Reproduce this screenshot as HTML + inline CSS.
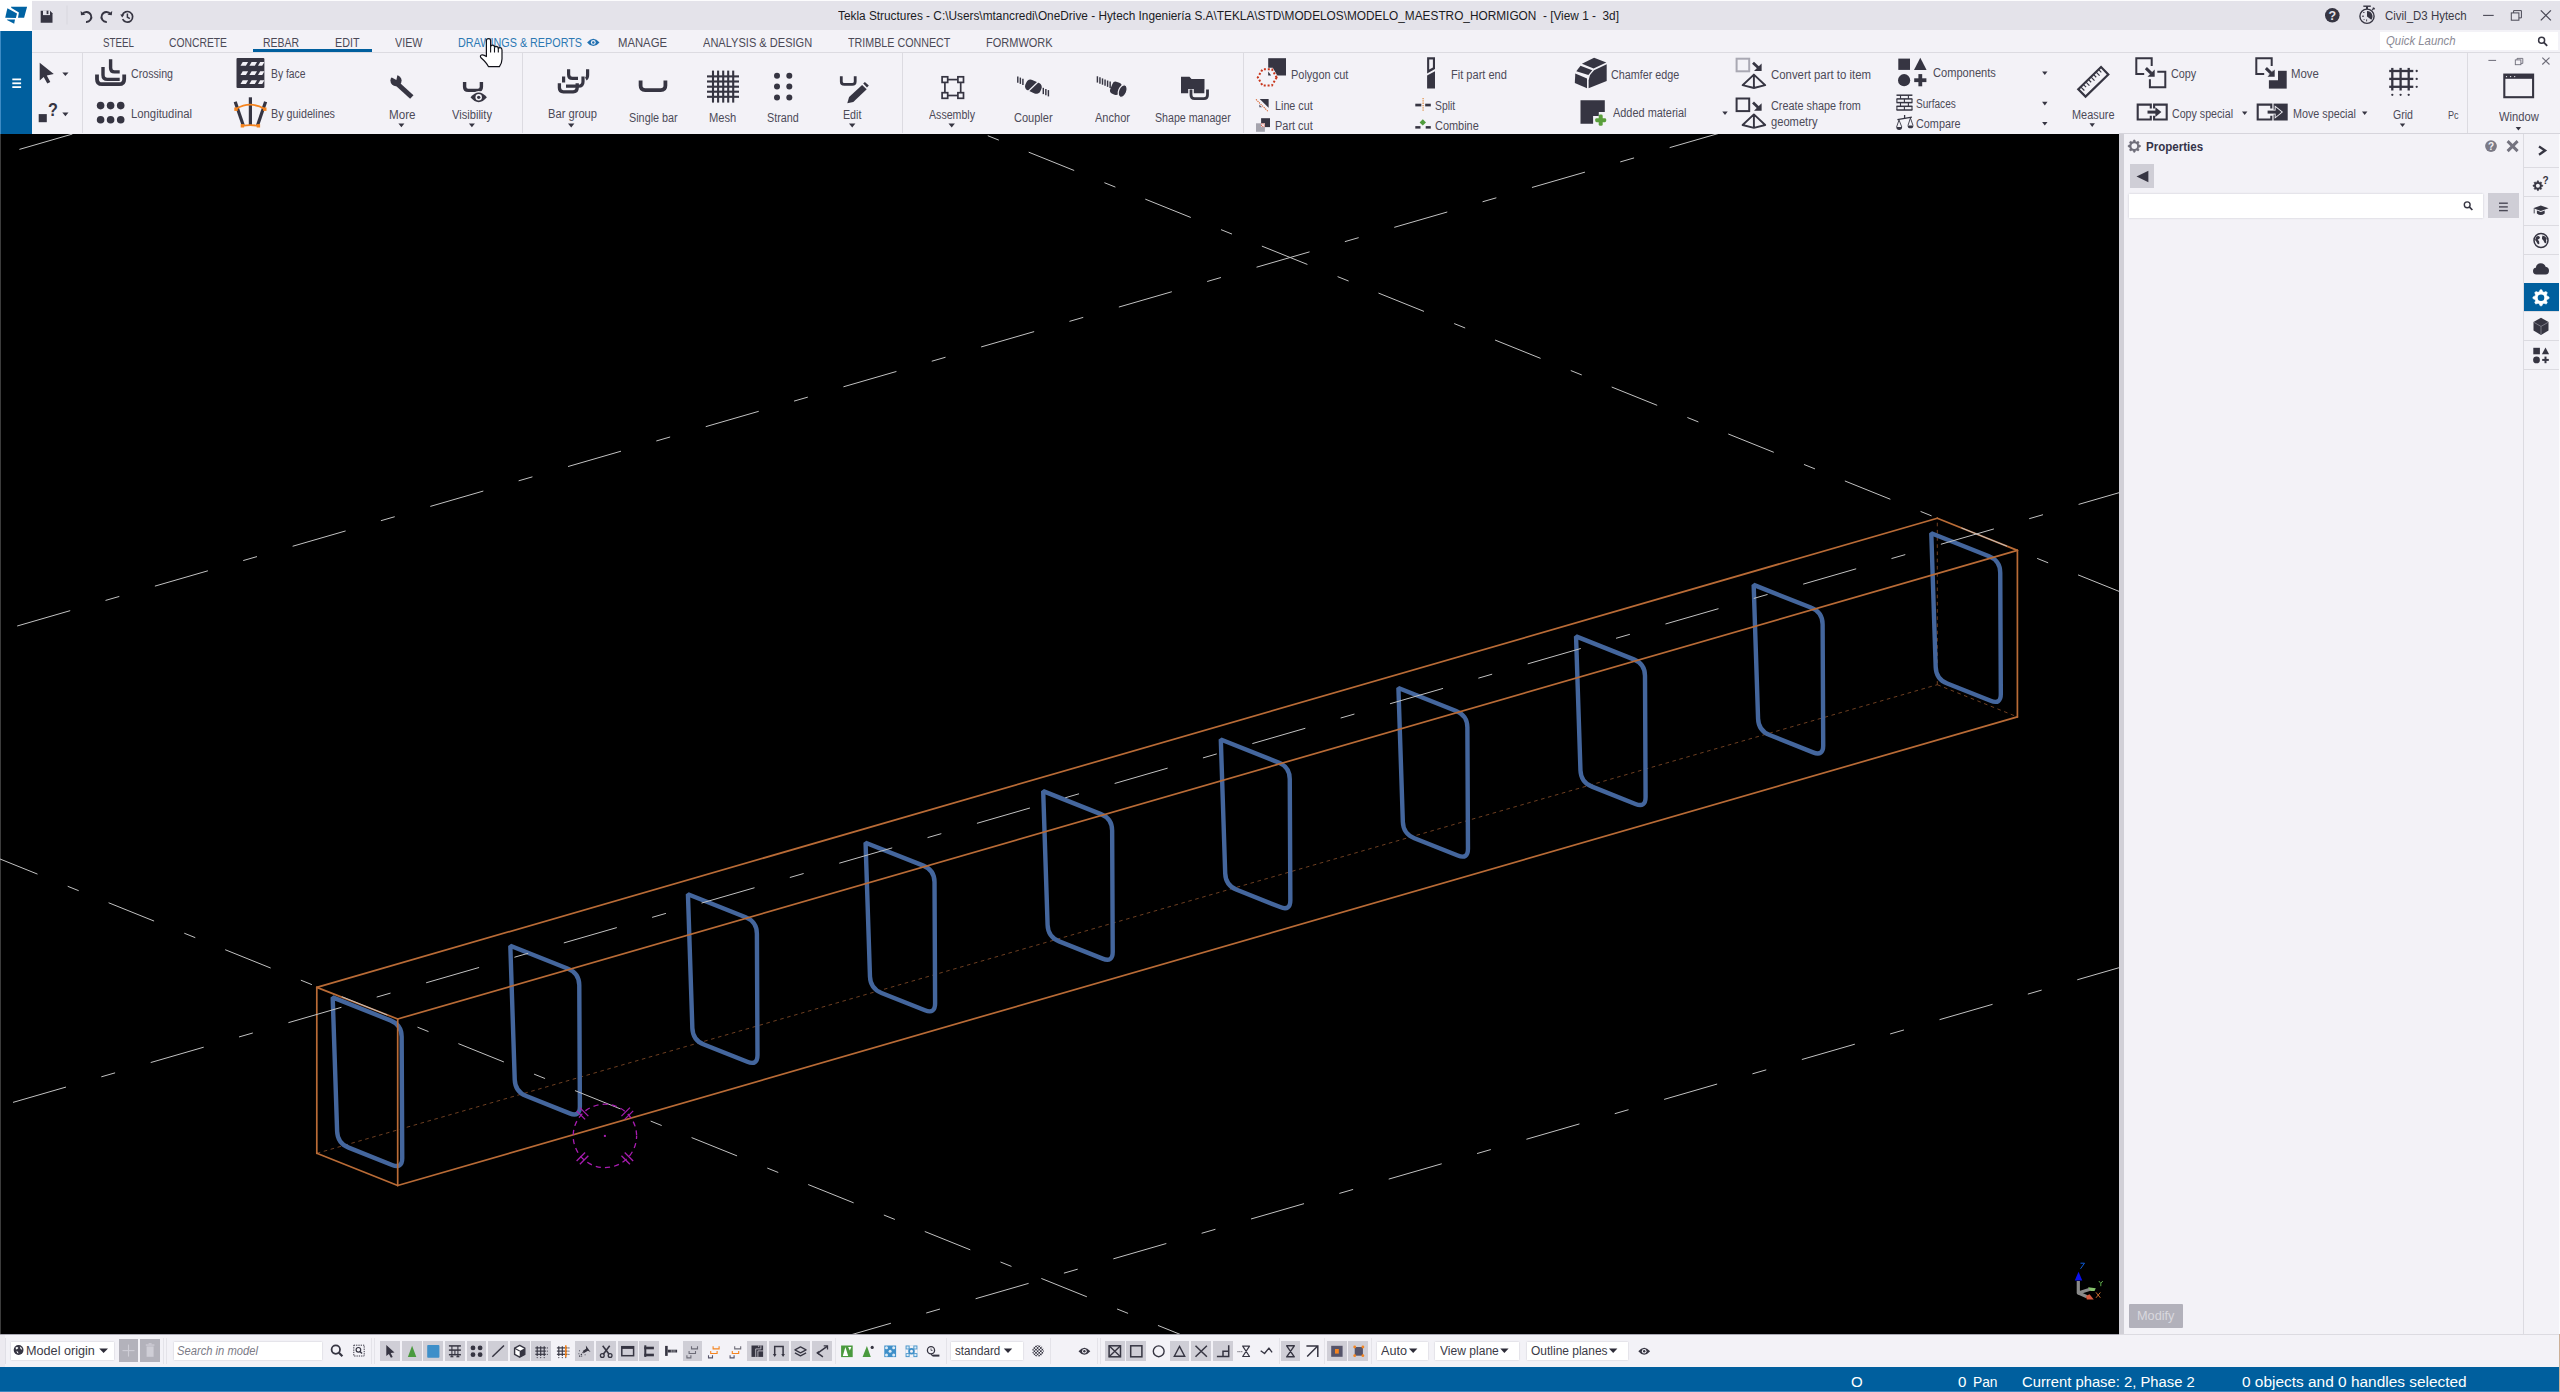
<!DOCTYPE html>
<html><head><meta charset="utf-8"><title>Tekla Structures</title>
<style>
html,body{margin:0;padding:0;}
body{width:2560px;height:1392px;position:relative;overflow:hidden;background:#f3f2f7;font-family:"Liberation Sans",sans-serif;}
body>div,body>span,body>svg{position:absolute;display:block;}
body>span{white-space:pre;transform-origin:0 50%;}
svg{overflow:visible;}
</style></head><body>
<div style="left:0px;top:0px;width:2560px;height:30px;background:#e4e3ea;"></div>
<div style="left:0px;top:0px;width:2560px;height:1px;background:#fcfcfd;"></div>
<div style="left:0px;top:0px;width:32px;height:30.5px;background:#ffffff;"></div>
<div style="left:32px;top:30px;width:2528px;height:104px;background:#f3f2f7;"></div>
<div style="left:32px;top:52px;width:2528px;height:1px;background:#dcdbe1;"></div>
<div style="left:0px;top:30.5px;width:32px;height:103.5px;background:#005f9e;"></div>
<div style="left:0px;top:30.5px;width:1px;height:103.5px;background:#3d8bc4;"></div>
<div style="left:82px;top:53px;width:1px;height:80px;background:#dcdbe1;"></div>
<div style="left:522px;top:53px;width:1px;height:80px;background:#dcdbe1;"></div>
<div style="left:902px;top:53px;width:1px;height:80px;background:#dcdbe1;"></div>
<div style="left:1243px;top:53px;width:1px;height:80px;background:#dcdbe1;"></div>
<div style="left:2467px;top:53px;width:1px;height:80px;background:#dcdbe1;"></div>
<div style="left:253px;top:49px;width:119px;height:3px;background:#005f9e;"></div>
<div style="left:2380px;top:32px;width:178px;height:18px;background:#ffffff;"></div>
<div style="left:0px;top:134px;width:2119px;height:1200px;background:#000000;"></div>
<div style="left:0px;top:134px;width:1px;height:1200px;background:#3c3c3c;"></div>
<div style="left:2119px;top:134px;width:5px;height:1200px;background:#d1d0d7;"></div>
<div style="left:2124px;top:134px;width:400px;height:1200px;background:#f3f2f7;"></div>
<div style="left:2119px;top:133px;width:441px;height:1px;background:#d6d5dc;"></div>
<div style="left:2523px;top:134px;width:1px;height:1200px;background:#dcdbe1;"></div>
<div style="left:2524px;top:134px;width:35px;height:1200px;background:#f3f2f7;"></div>
<div style="left:2559px;top:134px;width:1px;height:1200px;background:#fbfbfd;"></div>
<div style="left:2524px;top:167px;width:35px;height:1px;background:#dcdbe1;"></div>
<div style="left:2524px;top:196px;width:35px;height:1px;background:#dcdbe1;"></div>
<div style="left:2524px;top:225px;width:35px;height:1px;background:#dcdbe1;"></div>
<div style="left:2524px;top:254px;width:35px;height:1px;background:#dcdbe1;"></div>
<div style="left:2524px;top:283px;width:35px;height:1px;background:#dcdbe1;"></div>
<div style="left:2524px;top:311px;width:35px;height:1px;background:#dcdbe1;"></div>
<div style="left:2524px;top:340px;width:35px;height:1px;background:#dcdbe1;"></div>
<div style="left:2524px;top:369px;width:35px;height:1px;background:#dcdbe1;"></div>
<div style="left:2524.4px;top:283px;width:34.6px;height:28.3px;background:#005f9e;"></div>
<div style="left:2130px;top:164px;width:24px;height:24px;background:#cfced6;"></div>
<div style="left:2129px;top:194px;width:354px;height:24px;background:#ffffff;box-shadow:0 0 2px rgba(120,118,135,.35);"></div>
<div style="left:2488px;top:193px;width:31px;height:25px;background:#cfced6;"></div>
<div style="left:2129px;top:1304px;width:54px;height:24px;background:#b2b1bb;border-radius:1px;"></div>
<div style="left:0px;top:1334px;width:2560px;height:33px;background:#f3f2f7;"></div>
<div style="left:2119px;top:1334px;width:441px;height:1px;background:#dcdbe1;"></div>
<div style="left:0px;top:1367px;width:2560px;height:25px;background:#005f9e;"></div>
<div style="left:10.6px;top:1341.8px;width:103px;height:18.4px;background:#ffffff;box-shadow:0 0 1.5px rgba(120,118,135,.4);"></div>
<div style="left:119px;top:1339px;width:19px;height:23px;background:#b3b2bb;"></div>
<div style="left:140px;top:1339px;width:20px;height:23px;background:#b3b2bb;"></div>
<div style="left:163px;top:1338px;width:1px;height:26px;background:#e4e3e9;"></div>
<div style="left:166px;top:1338px;width:1px;height:26px;background:#e4e3e9;"></div>
<div style="left:371px;top:1338px;width:1px;height:26px;background:#e4e3e9;"></div>
<div style="left:374px;top:1338px;width:1px;height:26px;background:#e4e3e9;"></div>
<div style="left:1097px;top:1338px;width:1px;height:26px;background:#e4e3e9;"></div>
<div style="left:1100px;top:1338px;width:1px;height:26px;background:#e4e3e9;"></div>
<div style="left:174px;top:1341.8px;width:148.2px;height:18.4px;background:#ffffff;box-shadow:0 0 1.5px rgba(120,118,135,.4);"></div>
<div style="left:380.2px;top:1341px;width:19.8px;height:20px;background:#cfced6;"></div>
<div style="left:401.8px;top:1341px;width:19.8px;height:20px;background:#cfced6;"></div>
<div style="left:423.4px;top:1341px;width:19.8px;height:20px;background:#cfced6;"></div>
<div style="left:445.0px;top:1341px;width:19.8px;height:20px;background:#cfced6;"></div>
<div style="left:466.6px;top:1341px;width:19.8px;height:20px;background:#cfced6;"></div>
<div style="left:488.2px;top:1341px;width:19.8px;height:20px;background:#cfced6;"></div>
<div style="left:509.8px;top:1341px;width:19.8px;height:20px;background:#cfced6;"></div>
<div style="left:531.4px;top:1341px;width:19.8px;height:20px;background:#cfced6;"></div>
<div style="left:574.6px;top:1341px;width:19.8px;height:20px;background:#cfced6;"></div>
<div style="left:596.2px;top:1341px;width:19.8px;height:20px;background:#cfced6;"></div>
<div style="left:617.8px;top:1341px;width:19.8px;height:20px;background:#cfced6;"></div>
<div style="left:639.4px;top:1341px;width:19.8px;height:20px;background:#cfced6;"></div>
<div style="left:682.6px;top:1341px;width:19.8px;height:20px;background:#cfced6;"></div>
<div style="left:747.4px;top:1341px;width:19.8px;height:20px;background:#cfced6;"></div>
<div style="left:769.0px;top:1341px;width:19.8px;height:20px;background:#cfced6;"></div>
<div style="left:790.6px;top:1341px;width:19.8px;height:20px;background:#cfced6;"></div>
<div style="left:812.2px;top:1341px;width:19.8px;height:20px;background:#cfced6;"></div>
<div style="left:835px;top:1338px;width:1px;height:26px;background:#e4e3e9;"></div>
<div style="left:946px;top:1338px;width:1px;height:26px;background:#e4e3e9;"></div>
<div style="left:1050px;top:1338px;width:1px;height:26px;background:#e4e3e9;"></div>
<div style="left:951px;top:1341.6px;width:72px;height:18.8px;background:#ffffff;box-shadow:0 0 1.5px rgba(120,118,135,.4);"></div>
<div style="left:1104.8px;top:1341px;width:19.8px;height:20px;background:#cfced6;"></div>
<div style="left:1126.4px;top:1341px;width:19.8px;height:20px;background:#cfced6;"></div>
<div style="left:1169.6px;top:1341px;width:19.8px;height:20px;background:#cfced6;"></div>
<div style="left:1191.2px;top:1341px;width:19.8px;height:20px;background:#cfced6;"></div>
<div style="left:1212.8px;top:1341px;width:19.8px;height:20px;background:#cfced6;"></div>
<div style="left:1278.5px;top:1338px;width:1px;height:26px;background:#e4e3e9;"></div>
<div style="left:1280.6px;top:1341px;width:19.8px;height:20px;background:#cfced6;"></div>
<div style="left:1324.3px;top:1338px;width:1px;height:26px;background:#e4e3e9;"></div>
<div style="left:1326.8px;top:1341px;width:19.8px;height:20px;background:#cfced6;"></div>
<div style="left:1348.4px;top:1341px;width:19.8px;height:20px;background:#cfced6;"></div>
<div style="left:1371px;top:1338px;width:1px;height:26px;background:#e4e3e9;"></div>
<div style="left:1376.6px;top:1341.6px;width:51.2px;height:18.8px;background:#ffffff;box-shadow:0 0 1.5px rgba(120,118,135,.4);"></div>
<div style="left:1435.4px;top:1341.6px;width:83.6px;height:18.8px;background:#ffffff;box-shadow:0 0 1.5px rgba(120,118,135,.4);"></div>
<div style="left:1526.7px;top:1341.6px;width:101.4px;height:18.8px;background:#ffffff;box-shadow:0 0 1.5px rgba(120,118,135,.4);"></div>
<div style="left:2559px;top:1334px;width:1px;height:58px;background:#cdb097;"></div>
<div style="left:0px;top:1391px;width:2559px;height:1px;background:#3a86c0;"></div>
<div style="left:0px;top:1334px;width:2119px;height:1px;background:#a9a8b2;"></div>
<div style="left:0px;top:1335px;width:5px;height:32px;background:#eceaf0;"></div>
<div style="left:5px;top:1338px;width:1px;height:26px;background:#e0dfe6;"></div>
<span style="left:838.00px;top:7.20px;font-size:12px;line-height:18px;color:#1b1b1f;transform:scaleX(0.9861);">Tekla Structures - C:\Users\mtancredi\OneDrive - Hytech Ingeniería S.A\TEKLA\STD\MODELOS\MODELO_MAESTRO_HORMIGON  - [View 1 -  3d]</span>
<span style="left:2384.60px;top:6.70px;font-size:12.5px;line-height:19px;color:#3b3a46;transform:scaleX(0.9177);">Civil_D3 Hytech</span>
<span style="left:102.50px;top:33.00px;font-size:13px;line-height:20px;color:#4b4956;transform:scaleX(0.7527);">STEEL</span>
<span style="left:169.00px;top:33.00px;font-size:13px;line-height:20px;color:#4b4956;transform:scaleX(0.7951);">CONCRETE</span>
<span style="left:262.50px;top:33.00px;font-size:13px;line-height:20px;color:#4b4956;transform:scaleX(0.8037);">REBAR</span>
<span style="left:334.50px;top:33.00px;font-size:13px;line-height:20px;color:#4b4956;transform:scaleX(0.8274);">EDIT</span>
<span style="left:394.50px;top:33.00px;font-size:13px;line-height:20px;color:#4b4956;transform:scaleX(0.8277);">VIEW</span>
<span style="left:618.00px;top:33.00px;font-size:13px;line-height:20px;color:#4b4956;transform:scaleX(0.8697);">MANAGE</span>
<span style="left:703.40px;top:33.00px;font-size:13px;line-height:20px;color:#4b4956;transform:scaleX(0.8507);">ANALYSIS &amp; DESIGN</span>
<span style="left:848.30px;top:33.00px;font-size:13px;line-height:20px;color:#4b4956;transform:scaleX(0.8243);">TRIMBLE CONNECT</span>
<span style="left:986.30px;top:33.00px;font-size:13px;line-height:20px;color:#4b4956;transform:scaleX(0.8461);">FORMWORK</span>
<span style="left:458.00px;top:33.00px;font-size:13px;line-height:20px;color:#2c78b3;transform:scaleX(0.8293);">DRAWINGS &amp; REPORTS</span>
<span style="left:2386.00px;top:32.10px;font-size:12.5px;line-height:19px;color:#8b8a95;font-style:italic;transform:scaleX(0.9106);">Quick Launch</span>
<span style="left:130.50px;top:65.30px;font-size:12px;line-height:18px;color:#4c4a57;transform:scaleX(0.8870);">Crossing</span>
<span style="left:130.50px;top:105.30px;font-size:12px;line-height:18px;color:#4c4a57;transform:scaleX(0.9424);">Longitudinal</span>
<span style="left:270.50px;top:65.30px;font-size:12px;line-height:18px;color:#4c4a57;transform:scaleX(0.8621);">By face</span>
<span style="left:270.50px;top:105.30px;font-size:12px;line-height:18px;color:#4c4a57;transform:scaleX(0.8966);">By guidelines</span>
<span style="left:389.00px;top:106.30px;font-size:12px;line-height:18px;color:#4c4a57;transform:scaleX(0.9692);">More</span>
<span style="left:452.00px;top:106.30px;font-size:12px;line-height:18px;color:#4c4a57;transform:scaleX(0.9275);">Visibility</span>
<span style="left:548.00px;top:105.30px;font-size:12px;line-height:18px;color:#4c4a57;transform:scaleX(0.9298);">Bar group</span>
<span style="left:628.60px;top:108.60px;font-size:12px;line-height:18px;color:#4c4a57;transform:scaleX(0.9012);">Single bar</span>
<span style="left:708.70px;top:108.60px;font-size:12px;line-height:18px;color:#4c4a57;transform:scaleX(0.9303);">Mesh</span>
<span style="left:767.20px;top:108.60px;font-size:12px;line-height:18px;color:#4c4a57;transform:scaleX(0.8994);">Strand</span>
<span style="left:842.90px;top:105.60px;font-size:12px;line-height:18px;color:#4c4a57;transform:scaleX(0.8898);">Edit</span>
<span style="left:929.00px;top:105.60px;font-size:12px;line-height:18px;color:#4c4a57;transform:scaleX(0.8844);">Assembly</span>
<span style="left:1013.70px;top:108.60px;font-size:12px;line-height:18px;color:#4c4a57;transform:scaleX(0.9185);">Coupler</span>
<span style="left:1095.30px;top:108.60px;font-size:12px;line-height:18px;color:#4c4a57;transform:scaleX(0.9205);">Anchor</span>
<span style="left:1154.70px;top:108.60px;font-size:12px;line-height:18px;color:#4c4a57;transform:scaleX(0.8864);">Shape manager</span>
<span style="left:1291.00px;top:65.50px;font-size:12px;line-height:18px;color:#4c4a57;transform:scaleX(0.9138);">Polygon cut</span>
<span style="left:1275.30px;top:97.00px;font-size:12px;line-height:18px;color:#4c4a57;transform:scaleX(0.8970);">Line cut</span>
<span style="left:1275.30px;top:117.10px;font-size:12px;line-height:18px;color:#4c4a57;transform:scaleX(0.9117);">Part cut</span>
<span style="left:1451.40px;top:65.50px;font-size:12px;line-height:18px;color:#4c4a57;transform:scaleX(0.9209);">Fit part end</span>
<span style="left:1435.20px;top:97.00px;font-size:12px;line-height:18px;color:#4c4a57;transform:scaleX(0.8610);">Split</span>
<span style="left:1435.20px;top:117.10px;font-size:12px;line-height:18px;color:#4c4a57;transform:scaleX(0.9120);">Combine</span>
<span style="left:1611.20px;top:65.50px;font-size:12px;line-height:18px;color:#4c4a57;transform:scaleX(0.8981);">Chamfer edge</span>
<span style="left:1613.00px;top:104.20px;font-size:12px;line-height:18px;color:#4c4a57;transform:scaleX(0.9106);">Added material</span>
<span style="left:1771.00px;top:65.50px;font-size:12px;line-height:18px;color:#4c4a57;transform:scaleX(0.9490);">Convert part to item</span>
<span style="left:1771.00px;top:97.00px;font-size:12px;line-height:18px;color:#4c4a57;transform:scaleX(0.9036);">Create shape from</span>
<span style="left:1771.00px;top:112.50px;font-size:12px;line-height:18px;color:#4c4a57;transform:scaleX(0.9296);">geometry</span>
<span style="left:1932.60px;top:64.30px;font-size:12px;line-height:18px;color:#4c4a57;transform:scaleX(0.9244);">Components</span>
<span style="left:1916.40px;top:94.90px;font-size:12px;line-height:18px;color:#4c4a57;transform:scaleX(0.8404);">Surfaces</span>
<span style="left:1916.40px;top:114.80px;font-size:12px;line-height:18px;color:#4c4a57;transform:scaleX(0.9036);">Compare</span>
<span style="left:2071.80px;top:105.50px;font-size:12px;line-height:18px;color:#4c4a57;transform:scaleX(0.9103);">Measure</span>
<span style="left:2170.80px;top:65.10px;font-size:12px;line-height:18px;color:#4c4a57;transform:scaleX(0.8995);">Copy</span>
<span style="left:2172.20px;top:104.70px;font-size:12px;line-height:18px;color:#4c4a57;transform:scaleX(0.8879);">Copy special</span>
<span style="left:2290.90px;top:65.10px;font-size:12px;line-height:18px;color:#4c4a57;transform:scaleX(0.9508);">Move</span>
<span style="left:2292.50px;top:104.70px;font-size:12px;line-height:18px;color:#4c4a57;transform:scaleX(0.8981);">Move special</span>
<span style="left:2392.60px;top:105.50px;font-size:12px;line-height:18px;color:#4c4a57;transform:scaleX(0.8778);">Grid</span>
<span style="left:2498.90px;top:108.20px;font-size:12px;line-height:18px;color:#4c4a57;transform:scaleX(0.9325);">Window</span>
<span style="left:2447.60px;top:106.70px;font-size:11px;line-height:16px;color:#4c4a57;transform:scaleX(0.8257);">Pc</span>
<span style="left:2145.80px;top:137.60px;font-size:12px;line-height:18px;color:#35344a;font-weight:bold;transform:scaleX(0.9637);">Properties</span>
<span style="left:2137.20px;top:1306.80px;font-size:12.5px;line-height:19px;color:#d9d8de;transform:scaleX(1.0158);">Modify</span>
<span style="left:26.00px;top:1341.60px;font-size:12px;line-height:18px;color:#3b3a46;transform:scaleX(1.0540);">Model origin</span>
<span style="left:176.60px;top:1341.60px;font-size:12px;line-height:18px;color:#7b7a86;font-style:italic;transform:scaleX(0.9329);">Search in model</span>
<span style="left:955.00px;top:1341.90px;font-size:12px;line-height:18px;color:#3b3a46;transform:scaleX(0.9700);">standard</span>
<span style="left:1381.00px;top:1341.60px;font-size:12px;line-height:18px;color:#3b3a46;transform:scaleX(1.0532);">Auto</span>
<span style="left:1439.70px;top:1341.60px;font-size:12px;line-height:18px;color:#3b3a46;transform:scaleX(1.0053);">View plane</span>
<span style="left:1530.80px;top:1341.60px;font-size:12px;line-height:18px;color:#3b3a46;transform:scaleX(0.9985);">Outline planes</span>
<span style="left:1851.20px;top:1369.80px;font-size:15.5px;line-height:23px;color:#ffffff;transform:scaleX(0.9705);">O</span>
<span style="left:1957.60px;top:1369.80px;font-size:15.5px;line-height:23px;color:#ffffff;transform:scaleX(0.9744);">0</span>
<span style="left:1972.80px;top:1369.80px;font-size:15.5px;line-height:23px;color:#ffffff;transform:scaleX(0.8883);">Pan</span>
<span style="left:2021.80px;top:1369.80px;font-size:15.5px;line-height:23px;color:#ffffff;transform:scaleX(0.9544);">Current phase: 2, Phase 2</span>
<span style="left:2241.80px;top:1369.80px;font-size:15.5px;line-height:23px;color:#ffffff;transform:scaleX(0.9952);">0 objects and 0 handles selected</span>
<svg style="left:0;top:134px;overflow:hidden" width="2119" height="1200" viewBox="0 134 2119 1200"><g stroke="#8a4f29" stroke-width="0.8" stroke-dasharray="3.6 3.6" fill="none"><line x1="316.8" y1="1153.3" x2="1937.3" y2="684.7"/><line x1="1937.3" y1="684.7" x2="1937.3" y2="518.2"/><line x1="1937.3" y1="684.7" x2="2017.4" y2="716.9"/></g><g stroke="#44669d" stroke-width="4.4" fill="none" stroke-linejoin="bevel"><path d="M332.70,997.40 L390.45,1020.37 Q401.60,1024.80 401.66,1036.80 L402.25,1158.00 Q402.30,1169.00 392.08,1164.93 L348.65,1147.64 Q337.50,1143.20 337.11,1131.21 Z"/><path d="M510.32,945.83 L568.07,968.80 Q579.22,973.23 579.28,985.23 L579.87,1106.43 Q579.92,1117.43 569.70,1113.36 L526.27,1096.07 Q515.12,1091.63 514.73,1079.64 Z"/><path d="M687.94,894.26 L745.69,917.23 Q756.84,921.66 756.90,933.66 L757.49,1054.86 Q757.54,1065.86 747.32,1061.79 L703.89,1044.50 Q692.74,1040.06 692.35,1028.07 Z"/><path d="M865.56,842.69 L923.31,865.66 Q934.46,870.09 934.52,882.09 L935.11,1003.29 Q935.16,1014.29 924.94,1010.22 L881.51,992.93 Q870.36,988.49 869.97,976.50 Z"/><path d="M1043.18,791.12 L1100.93,814.09 Q1112.08,818.52 1112.14,830.52 L1112.73,951.72 Q1112.78,962.72 1102.56,958.65 L1059.13,941.36 Q1047.98,936.92 1047.59,924.93 Z"/><path d="M1220.80,739.55 L1278.55,762.52 Q1289.70,766.95 1289.76,778.95 L1290.35,900.15 Q1290.40,911.15 1280.18,907.08 L1236.75,889.79 Q1225.60,885.35 1225.21,873.36 Z"/><path d="M1398.42,687.98 L1456.17,710.95 Q1467.32,715.38 1467.38,727.38 L1467.97,848.58 Q1468.02,859.58 1457.80,855.51 L1414.37,838.22 Q1403.22,833.78 1402.83,821.79 Z"/><path d="M1576.04,636.41 L1633.79,659.38 Q1644.94,663.81 1645.00,675.81 L1645.59,797.01 Q1645.64,808.01 1635.42,803.94 L1591.99,786.65 Q1580.84,782.21 1580.45,770.22 Z"/><path d="M1753.66,584.84 L1811.41,607.81 Q1822.56,612.24 1822.62,624.24 L1823.21,745.44 Q1823.26,756.44 1813.04,752.37 L1769.61,735.08 Q1758.46,730.64 1758.07,718.65 Z"/><path d="M1931.28,533.27 L1989.03,556.24 Q2000.18,560.67 2000.24,572.67 L2000.83,693.87 Q2000.88,704.87 1990.66,700.80 L1947.23,683.51 Q1936.08,679.07 1935.69,667.08 Z"/></g><g stroke="#b96b36" stroke-width="1.7" fill="none" stroke-linecap="round"><line x1="316.8" y1="987.4" x2="1937.3" y2="518.2"/><line x1="397.7" y1="1019.0" x2="2017.4" y2="550.4"/><line x1="397.7" y1="1185.5" x2="2017.4" y2="716.9"/><line x1="1937.3" y1="518.2" x2="2017.4" y2="550.4"/><line x1="2017.4" y1="550.4" x2="2017.4" y2="716.9"/><line x1="316.8" y1="987.4" x2="397.7" y2="1019.0"/><line x1="397.7" y1="1019.0" x2="397.7" y2="1185.5"/><line x1="397.7" y1="1185.5" x2="316.8" y2="1153.3"/><line x1="316.8" y1="1153.3" x2="316.8" y2="987.4"/></g><g stroke="#c2c2c2" stroke-width="1.0" fill="none"><line x1="19.40" y1="149.40" x2="140.00" y2="114.49" stroke-dasharray="55.18 36.75 14.37 37.06"/><line x1="17.20" y1="626.00" x2="1760.00" y2="121.46" stroke-dasharray="55.18 36.75 14.37 37.06"/><line x1="13.00" y1="1102.40" x2="2140.00" y2="486.63" stroke-dasharray="55.18 36.75 14.37 37.06"/><line x1="700.20" y1="1378.45" x2="2140.00" y2="961.63" stroke-dasharray="55.18 36.75 14.37 37.06"/><line x1="795.50" y1="58.25" x2="2140.00" y2="599.82" stroke-dasharray="49.05 32.56 11.86 32.23"/><line x1="-124.60" y1="808.81" x2="1250.00" y2="1362.50" stroke-dasharray="49.05 32.56 11.86 32.23"/></g><g stroke="#a81cb0" stroke-width="1.3" fill="none"><circle cx="604.9" cy="1135.9" r="31.7" stroke-dasharray="5.2 4.1" stroke-dashoffset="2"/><line x1="624.70" y1="1152.45" x2="633.18" y2="1160.93"/><line x1="621.45" y1="1155.70" x2="629.93" y2="1164.18"/><line x1="588.35" y1="1155.70" x2="579.87" y2="1164.18"/><line x1="585.10" y1="1152.45" x2="576.62" y2="1160.93"/><line x1="585.10" y1="1119.35" x2="576.62" y2="1110.87"/><line x1="588.35" y1="1116.10" x2="579.87" y2="1107.62"/><line x1="621.45" y1="1116.10" x2="629.93" y2="1107.62"/><line x1="624.70" y1="1119.35" x2="633.18" y2="1110.87"/></g><rect x="603.9" y="1134.9" width="2" height="2" fill="#a81cb0"/><g><path d="M2078.3,1281 L2078.3,1293 L2090,1289.2" stroke="#8a8a8a" stroke-width="3.2" fill="none" stroke-linejoin="round"/><path d="M2078.5,1293 L2087,1296.8" stroke="#8a8a8a" stroke-width="3.2" fill="none"/><path d="M2078.5,1271.8 L2082.3,1280.6 L2074.8,1280.6 Z" fill="#0a10f0"/><path d="M2088,1287.2 L2095.8,1288.3 L2094.5,1291 L2090.5,1291 Z" fill="#86c26c"/><path d="M2086,1296 L2089.5,1294.2 L2093.8,1299.6 L2086.8,1299.4 Z" fill="#d75a3f"/><path d="M2080.5,1263.2 h4 l-4,5.6" stroke="#0d5bd8" stroke-width="1" fill="none"/><path d="M2098.8,1281 l2,2.4 l2,-2.4 M2100.8,1283.4 v2.8" stroke="#5da84a" stroke-width="1" fill="none"/><path d="M2096,1292.4 l4.4,5.4 M2100.4,1292.4 l-4.4,5.4" stroke="#c46a2e" stroke-width="1" fill="none"/></g></svg>
<svg style="left:0;top:0" width="2560" height="1392" viewBox="0 0 2560 1392"><polygon points="10.90,6.80 27.10,6.80 24.10,17.80 18.00,17.80 18.90,12.60 11.50,7.90" fill="#0063a3" /><polygon points="7.40,8.20 17.00,13.40 15.90,18.00 5.20,17.80" fill="#0063a3" /><polygon points="6.80,19.40 15.00,19.40 14.20,23.80 7.40,20.20" fill="#0063a3" /><path d="M40.7,10.7 H50 L52.5,13.2 V22.7 H40.7 Z" fill="#363542" stroke="none" stroke-width="0" /><rect x="43.00" y="10.50" width="7.00" height="4.60" fill="#e4e3ea" /><rect x="46.60" y="10.70" width="1.80" height="3.40" fill="#363542" /><rect x="66.50" y="5.50" width="1.00" height="19.00" fill="#d8d7de" /><path d="M82.2,14.2 A5,5 0 1 1 86,22" fill="none" stroke="#363542" stroke-width="1.9" stroke-linecap="butt"/><polygon points="80.60,11.00 81.00,15.20 85.30,14.70" fill="#363542" /><path d="M110.6,14.2 A5,5 0 1 0 106.8,22" fill="none" stroke="#363542" stroke-width="1.9" /><polygon points="112.20,11.00 111.80,15.20 107.50,14.70" fill="#363542" /><path d="M122.3,15.2 A5.3,5.3 0 1 1 122.6,19.2" fill="none" stroke="#363542" stroke-width="1.7" /><polygon points="120.20,14.60 124.30,14.60 122.20,17.60" fill="#363542" /><path d="M127.4,13.6 V17.2 L129.9,18.6" fill="none" stroke="#363542" stroke-width="1.5" /><rect x="12.30" y="78.50" width="8.80" height="1.80" fill="#ffffff" /><rect x="12.30" y="82.40" width="8.80" height="1.80" fill="#ffffff" /><rect x="12.30" y="86.20" width="8.80" height="1.80" fill="#ffffff" /><polygon points="39.70,62.80 53.80,73.90 46.80,75.40 50.30,82.00 47.30,83.50 43.70,76.90 39.70,80.40" fill="#363542" /><path d="M62.30,72.40 h6.2 l-3.10,3.6 Z" fill="#363542"/><rect x="38.70" y="114.10" width="8.10" height="8.10" fill="#363542" /><text x="48" y="116.3" font-family="Liberation Sans" font-weight="bold" font-size="18" fill="#363542" transform="translate(48,0) scale(0.9,1) translate(-48,0)">?</text><path d="M62.30,112.60 h6.2 l-3.10,3.6 Z" fill="#363542"/><path d="M97,74.4 V79.2 Q97,84.2 102,84.2 H119.2 Q124.2,84.2 124.2,79.2 V74.4" fill="none" stroke="#363542" stroke-width="3.8" /><path d="M103,66.9 V75 Q103,79.4 107.4,79.4 H119.7" fill="none" stroke="#363542" stroke-width="3.4" /><path d="M110.6,59.3 V68 Q110.6,71.9 114.5,71.9 H119.7" fill="none" stroke="#363542" stroke-width="3.4" /><circle cx="100.60" cy="105.60" r="3.80" fill="#363542" /><circle cx="100.60" cy="119.70" r="3.80" fill="#363542" /><circle cx="110.60" cy="105.60" r="3.80" fill="#363542" /><circle cx="110.60" cy="119.70" r="3.80" fill="#363542" /><circle cx="120.70" cy="105.60" r="3.80" fill="#363542" /><circle cx="120.70" cy="119.70" r="3.80" fill="#363542" /><rect x="236.50" y="58.00" width="27.90" height="30.00" fill="#363542" rx="1"/><polygon points="242.70,62.00 248.10,62.00 245.90,65.80 240.50,65.80" fill="#f3f2f7" /><polygon points="251.60,62.00 257.00,62.00 254.80,65.80 249.40,65.80" fill="#f3f2f7" /><polygon points="260.20,62.00 264.40,62.00 262.20,65.80 258.00,65.80" fill="#f3f2f7" /><polygon points="242.70,71.30 248.10,71.30 245.90,75.10 240.50,75.10" fill="#f3f2f7" /><polygon points="251.60,71.30 257.00,71.30 254.80,75.10 249.40,75.10" fill="#f3f2f7" /><polygon points="260.20,71.30 264.40,71.30 262.20,75.10 258.00,75.10" fill="#f3f2f7" /><polygon points="242.70,80.30 248.10,80.30 245.90,84.10 240.50,84.10" fill="#f3f2f7" /><polygon points="251.60,80.30 257.00,80.30 254.80,84.10 249.40,84.10" fill="#f3f2f7" /><polygon points="260.20,80.30 264.40,80.30 262.20,84.10 258.00,84.10" fill="#f3f2f7" /><line x1="250.40" y1="97.30" x2="250.40" y2="125.20" stroke="#363542" stroke-width="3.2" /><line x1="235.20" y1="101.70" x2="243.20" y2="125.20" stroke="#363542" stroke-width="3.2" /><line x1="265.60" y1="101.70" x2="257.60" y2="125.20" stroke="#363542" stroke-width="3.2" /><path d="M236,109 Q250.4,100.4 264.8,109" fill="none" stroke="#f5841f" stroke-width="1.8" /><path d="M242.4,125.8 Q250.4,124.6 258.4,125.8" fill="none" stroke="#f5841f" stroke-width="1.8" /><rect x="234.30" y="107.50" width="3.40" height="3.40" fill="#f5841f" /><rect x="263.10" y="107.50" width="3.40" height="3.40" fill="#f5841f" /><rect x="240.70" y="124.10" width="3.40" height="3.40" fill="#f5841f" /><rect x="256.70" y="124.10" width="3.40" height="3.40" fill="#f5841f" /><line x1="397.50" y1="84.00" x2="411.80" y2="97.00" stroke="#363542" stroke-width="5" stroke-linecap="butt"/><circle cx="396.00" cy="80.60" r="5.60" fill="#363542" /><polygon points="396.40,80.00 398.20,71.00 388.00,75.50" fill="#f3f2f7" /><path d="M398.40,123.50 h6 l-3.00,3.8 Z" fill="#363542"/><path d="M464.6,82 V86.80000000000001 Q464.6,90.4 468.20000000000005,90.4 H477.79999999999995 Q481.4,90.4 481.4,86.80000000000001 V82" fill="none" stroke="#363542" stroke-width="3.4" /><path d="M469.20,97.3 Q478.7,84.90 488.20,97.3 Q478.7,109.70 469.20,97.3 Z" fill="#f3f2f7" stroke="none" stroke-width="0" /><circle cx="478.70" cy="97.30" r="4.09" fill="#f3f2f7" /><circle cx="478.70" cy="97.30" r="2.11" fill="#f3f2f7" /><path d="M470.50,97.3 Q478.7,87.50 486.90,97.3 Q478.7,107.10 470.50,97.3 Z" fill="#363542" stroke="none" stroke-width="0" /><circle cx="478.70" cy="97.30" r="3.23" fill="#f3f2f7" /><circle cx="478.70" cy="97.30" r="1.67" fill="#363542" /><path d="M468.90,123.50 h6 l-3.00,3.8 Z" fill="#363542"/><path d="M559.4,83.2 V87.8 Q559.4,91.8 563.4,91.8 H573.2 Q577.2,91.8 577.2,87.8 V83.2" fill="none" stroke="#363542" stroke-width="3.3" /><path d="M563.6,76.4 V82.4 M566,86.2 H578.5 Q583,86.2 583,81.8 V76.4" fill="none" stroke="#363542" stroke-width="3.2" /><path d="M568.6,69.3 V74.5 Q568.6,78.4 572.4,78.4 H578 M587.6,69.3 V75 Q587.6,78 585.8,79" fill="none" stroke="#363542" stroke-width="3.2" /><path d="M568.00,123.60 h6.4 l-3.20,4 Z" fill="#363542"/><path d="M640.6,80.5 V85.60000000000001 Q640.6,90.2 645.2,90.2 H660.8 Q665.4,90.2 665.4,85.60000000000001 V80.5" fill="none" stroke="#363542" stroke-width="3.8" /><line x1="713.00" y1="70.60" x2="713.00" y2="102.60" stroke="#363542" stroke-width="2.1" /><line x1="718.10" y1="70.60" x2="718.10" y2="102.60" stroke="#363542" stroke-width="2.1" /><line x1="723.20" y1="70.60" x2="723.20" y2="102.60" stroke="#363542" stroke-width="2.1" /><line x1="728.20" y1="70.60" x2="728.20" y2="102.60" stroke="#363542" stroke-width="2.1" /><line x1="733.20" y1="70.60" x2="733.20" y2="102.60" stroke="#363542" stroke-width="2.1" /><line x1="707.00" y1="76.40" x2="739.00" y2="76.40" stroke="#363542" stroke-width="2.1" /><line x1="707.00" y1="81.50" x2="739.00" y2="81.50" stroke="#363542" stroke-width="2.1" /><line x1="707.00" y1="86.70" x2="739.00" y2="86.70" stroke="#363542" stroke-width="2.1" /><line x1="707.00" y1="91.70" x2="739.00" y2="91.70" stroke="#363542" stroke-width="2.1" /><line x1="707.00" y1="96.80" x2="739.00" y2="96.80" stroke="#363542" stroke-width="2.1" /><circle cx="777.00" cy="75.70" r="3.00" fill="#363542" /><circle cx="777.00" cy="86.60" r="3.00" fill="#363542" /><circle cx="777.00" cy="97.50" r="3.00" fill="#363542" /><circle cx="789.30" cy="75.70" r="3.00" fill="#363542" /><circle cx="789.30" cy="86.60" r="3.00" fill="#363542" /><circle cx="789.30" cy="97.50" r="3.00" fill="#363542" /><path d="M841.3,76.3 V81.4 Q841.3,84.4 844.3,84.4 H852.2 Q855.2,84.4 855.2,81.4 V76.3" fill="none" stroke="#363542" stroke-width="2.8" /><polygon points="862.10,85.00 866.70,89.30 853.30,101.90 847.30,103.30 849.10,97.00" fill="#363542" /><polygon points="864.90,81.90 868.80,85.40 867.00,87.50 863.20,83.60" fill="#363542" /><path d="M849.00,123.60 h6.4 l-3.20,4 Z" fill="#363542"/><rect x="942.10" y="76.80" width="5.60" height="5.60" fill="none" stroke="#363542" stroke-width="1.7" /><rect x="957.90" y="76.80" width="5.60" height="5.60" fill="none" stroke="#363542" stroke-width="1.7" /><rect x="942.10" y="92.70" width="5.60" height="5.60" fill="none" stroke="#363542" stroke-width="1.7" /><rect x="957.90" y="92.70" width="5.60" height="5.60" fill="none" stroke="#363542" stroke-width="1.7" /><line x1="947.70" y1="79.60" x2="957.90" y2="79.60" stroke="#363542" stroke-width="1.7" /><line x1="947.70" y1="95.50" x2="957.90" y2="95.50" stroke="#363542" stroke-width="1.7" /><line x1="944.90" y1="82.40" x2="944.90" y2="92.70" stroke="#363542" stroke-width="1.7" /><line x1="960.70" y1="82.40" x2="960.70" y2="92.70" stroke="#363542" stroke-width="1.7" /><path d="M948.50,123.60 h6.4 l-3.20,4 Z" fill="#363542"/><line x1="1017.80" y1="76.46" x2="1017.80" y2="82.76" stroke="#363542" stroke-width="1.45" /><line x1="1020.35" y1="77.59" x2="1020.35" y2="83.89" stroke="#363542" stroke-width="1.45" /><line x1="1022.90" y1="78.73" x2="1022.90" y2="85.03" stroke="#363542" stroke-width="1.45" /><line x1="1043.30" y1="87.83" x2="1043.30" y2="94.13" stroke="#363542" stroke-width="1.45" /><line x1="1045.85" y1="88.97" x2="1045.85" y2="95.27" stroke="#363542" stroke-width="1.45" /><line x1="1048.40" y1="90.10" x2="1048.40" y2="96.40" stroke="#363542" stroke-width="1.45" /><g transform="rotate(24 1033.4 86.7)"><rect x="1025.2" y="81" width="16.4" height="11.4" rx="4.4" fill="#363542"/><rect x="1032.2" y="79.5" width="1.5" height="14.5" fill="#f3f2f7" transform="skewX(-22) translate(35.2 0)"/></g><line x1="1097.40" y1="76.27" x2="1097.40" y2="82.57" stroke="#363542" stroke-width="1.45" /><line x1="1099.95" y1="77.34" x2="1099.95" y2="83.64" stroke="#363542" stroke-width="1.45" /><line x1="1102.50" y1="78.41" x2="1102.50" y2="84.71" stroke="#363542" stroke-width="1.45" /><line x1="1105.05" y1="79.48" x2="1105.05" y2="85.78" stroke="#363542" stroke-width="1.45" /><line x1="1107.60" y1="80.55" x2="1107.60" y2="86.85" stroke="#363542" stroke-width="1.45" /><line x1="1110.15" y1="81.62" x2="1110.15" y2="87.92" stroke="#363542" stroke-width="1.45" /><g transform="rotate(22 1119 89.5)"><rect x="1110.8" y="83.2" width="9.6" height="12.8" rx="3.6" fill="#363542"/><ellipse cx="1123" cy="89.6" rx="4" ry="6.6" fill="#363542" stroke="#f3f2f7" stroke-width="1.2"/></g><path d="M1181,76.7 H1189.5 L1191.5,78.9 H1204.5 V93.2 H1181 Z" fill="#363542" stroke="none" stroke-width="0" /><path d="M1191,89 V95 Q1191,99 1195,99 H1203.5 Q1207.5,99 1207.5,95 V89" fill="none" stroke="#f3f2f7" stroke-width="5.6" /><path d="M1191,89.6 V95 Q1191,98.6 1194.6,98.6 H1203.9 Q1207.5,98.6 1207.5,95 V89.6" fill="none" stroke="#363542" stroke-width="2.8" /><rect x="1268.20" y="58.20" width="17.80" height="17.30" fill="#363542" /><polygon points="1278.40,77.40 1272.80,87.10 1261.60,87.10 1256.00,77.40 1261.60,67.70 1272.80,67.70" fill="#f3f2f7" /><polygon points="1268.20,71.50 1268.20,75.50 1271.20,75.50" fill="#363542" /><polygon points="1276.60,77.40 1271.90,85.54 1262.50,85.54 1257.80,77.40 1262.50,69.26 1271.90,69.26" fill="none" stroke="#c8361c" stroke-width="2" stroke-dasharray="2 1.9"/><polygon points="1259.70,98.90 1268.60,98.90 1268.60,107.80" fill="#363542" /><polygon points="1259.30,104.60 1262.00,107.30 1259.30,107.30" fill="#55546a" /><line x1="1256.00" y1="99.40" x2="1268.20" y2="111.60" stroke="#d8602a" stroke-width="1.1" stroke-dasharray="1.2 1"/><rect x="1261.10" y="118.20" width="8.90" height="8.90" fill="#363542" /><rect x="1256.00" y="123.30" width="8.90" height="8.50" fill="#a4a3ad" /><rect x="1261.10" y="123.30" width="3.80" height="3.80" fill="#f3f2f7" /><rect x="1261.60" y="123.80" width="2.80" height="2.80" fill="none" stroke="#c8361c" stroke-width="0.8" stroke-dasharray="1 0.8"/><polygon points="1427.10,57.20 1435.00,57.20 1435.00,69.00 1427.10,73.40" fill="#363542" /><polygon points="1429.20,59.40 1432.90,59.40 1432.90,67.40 1429.20,69.60" fill="#f3f2f7" /><polygon points="1427.10,75.60 1435.00,71.20 1435.00,88.60 1427.10,88.60" fill="#363542" /><rect x="1415.30" y="103.70" width="6.00" height="2.70" fill="#363542" /><rect x="1425.20" y="103.70" width="5.60" height="2.70" fill="#363542" /><line x1="1423.10" y1="98.00" x2="1423.10" y2="111.60" stroke="#e08a3c" stroke-width="1.2" stroke-dasharray="1.3 1"/><rect x="1415.30" y="126.10" width="5.20" height="2.50" fill="#363542" /><rect x="1425.70" y="126.10" width="5.10" height="2.50" fill="#363542" /><polygon points="1422.80,119.20 1426.00,122.40 1422.80,125.60 1419.60,122.40" fill="#4f9c3c" /><polygon points="1581.90,63.80 1594.10,57.70 1606.30,62.40 1593.60,68.50" fill="#363542" /><polygon points="1580.50,65.70 1592.20,70.30 1588.40,75.00 1576.30,71.30" fill="#363542" /><polygon points="1575.30,73.40 1587.00,78.40 1587.00,88.20 1574.80,83.00" fill="#363542" /><polygon points="1594.10,70.30 1606.70,64.30 1606.70,81.10 1588.60,88.20 1588.60,80.20 1590.00,75.00" fill="#363542" /><path d="M1580.5,100.3 H1604.8 V112.1 H1598.8 V116 H1593.1 V123.8 H1580.5 Z" fill="#363542" stroke="none" stroke-width="0" /><rect x="1595.20" y="118.20" width="11.00" height="4.00" fill="#5a9f3b" rx="1.4"/><rect x="1598.70" y="114.60" width="4.00" height="11.20" fill="#5a9f3b" rx="1.4"/><path d="M1722.30,111.50 h5.4 l-2.70,3.4 Z" fill="#363542"/><rect x="1736.60" y="58.70" width="12.60" height="12.60" fill="none" stroke="#a9a8b3" stroke-width="2" /><line x1="1753.00" y1="62.80" x2="1759.20" y2="68.60" stroke="#363542" stroke-width="2.8" /><polygon points="1761.60,63.40 1761.60,71.00 1754.00,71.00" fill="#363542" /><path d="M1753.9,74.6 L1742.6,85.2 L1753.9,88 L1765.2,85.2 Z M1753.9,74.6 V88" fill="none" stroke="#363542" stroke-width="1.9" stroke-linejoin="round"/><rect x="1736.60" y="98.50" width="12.60" height="12.60" fill="none" stroke="#363542" stroke-width="2" /><line x1="1753.00" y1="102.60" x2="1759.20" y2="108.40" stroke="#363542" stroke-width="2.8" /><polygon points="1761.60,103.20 1761.60,110.80 1754.00,110.80" fill="#363542" /><path d="M1753.9,114.39999999999999 L1742.6,125.0 L1753.9,127.8 L1765.2,125.0 Z M1753.9,114.39999999999999 V127.8" fill="none" stroke="#363542" stroke-width="1.9" stroke-linejoin="round"/><rect x="1898.30" y="58.60" width="11.70" height="11.30" fill="#363542" /><polygon points="1920.30,57.70 1926.60,69.90 1914.00,69.90" fill="#363542" /><circle cx="1904.10" cy="80.20" r="6.10" fill="#363542" /><rect x="1914.20" y="78.30" width="12.20" height="3.80" fill="#363542" /><rect x="1918.40" y="74.10" width="3.80" height="12.20" fill="#363542" /><path d="M2042.10,71.40 h5.4 l-2.70,3.6 Z" fill="#363542"/><path d="M2042.10,101.80 h5.4 l-2.70,3.6 Z" fill="#363542"/><path d="M2042.10,122.00 h5.4 l-2.70,3.6 Z" fill="#363542"/><line x1="1896.50" y1="95.20" x2="1912.40" y2="95.20" stroke="#363542" stroke-width="1.5" /><line x1="1896.50" y1="98.90" x2="1912.40" y2="98.90" stroke="#363542" stroke-width="1.5" /><line x1="1896.50" y1="102.60" x2="1912.40" y2="102.60" stroke="#363542" stroke-width="1.5" /><line x1="1896.50" y1="106.30" x2="1912.40" y2="106.30" stroke="#363542" stroke-width="1.5" /><line x1="1896.50" y1="110.00" x2="1912.40" y2="110.00" stroke="#363542" stroke-width="1.5" /><line x1="1900.50" y1="95.20" x2="1900.50" y2="98.90" stroke="#363542" stroke-width="1.1" /><line x1="1908.40" y1="95.20" x2="1908.40" y2="98.90" stroke="#363542" stroke-width="1.1" /><line x1="1896.90" y1="98.90" x2="1896.90" y2="102.60" stroke="#363542" stroke-width="1.1" /><line x1="1904.40" y1="98.90" x2="1904.40" y2="102.60" stroke="#363542" stroke-width="1.1" /><line x1="1912.00" y1="98.90" x2="1912.00" y2="102.60" stroke="#363542" stroke-width="1.1" /><line x1="1900.50" y1="102.60" x2="1900.50" y2="106.30" stroke="#363542" stroke-width="1.1" /><line x1="1908.40" y1="102.60" x2="1908.40" y2="106.30" stroke="#363542" stroke-width="1.1" /><line x1="1896.90" y1="106.30" x2="1896.90" y2="110.00" stroke="#363542" stroke-width="1.1" /><line x1="1904.40" y1="106.30" x2="1904.40" y2="110.00" stroke="#363542" stroke-width="1.1" /><line x1="1912.00" y1="106.30" x2="1912.00" y2="110.00" stroke="#363542" stroke-width="1.1" /><line x1="1897.40" y1="119.60" x2="1911.90" y2="117.20" stroke="#363542" stroke-width="1.3" /><line x1="1904.60" y1="115.00" x2="1904.60" y2="119.00" stroke="#363542" stroke-width="1.3" /><path d="M1899,120 L1896.6,127 M1899,120 L1901.8,127" fill="none" stroke="#363542" stroke-width="0.9" /><path d="M1910.4,118 L1908,125.4 M1910.4,118 L1913,125.4" fill="none" stroke="#363542" stroke-width="0.9" /><path d="M1896.3,127 H1902.1 A2.9,2.9 0 0 1 1896.3,127 Z" fill="#363542" stroke="none" stroke-width="0" /><path d="M1907.6,125.4 H1913.4 A2.9,2.9 0 0 1 1907.6,125.4 Z" fill="#363542" stroke="none" stroke-width="0" /><g transform="rotate(-44.3 2093.3 81.8)"><rect x="2077.4" y="76.6" width="31.8" height="10.4" fill="none" stroke="#363542" stroke-width="2.2"/><line x1="2080.80" y1="76.6" x2="2080.80" y2="81.8" stroke="#363542" stroke-width="1.2"/><line x1="2084.35" y1="76.6" x2="2084.35" y2="80.6" stroke="#363542" stroke-width="1.2"/><line x1="2087.90" y1="76.6" x2="2087.90" y2="81.8" stroke="#363542" stroke-width="1.2"/><line x1="2091.45" y1="76.6" x2="2091.45" y2="80.6" stroke="#363542" stroke-width="1.2"/><line x1="2095.00" y1="76.6" x2="2095.00" y2="81.8" stroke="#363542" stroke-width="1.2"/><line x1="2098.55" y1="76.6" x2="2098.55" y2="80.6" stroke="#363542" stroke-width="1.2"/><line x1="2102.10" y1="76.6" x2="2102.10" y2="81.8" stroke="#363542" stroke-width="1.2"/><line x1="2105.65" y1="76.6" x2="2105.65" y2="80.6" stroke="#363542" stroke-width="1.2"/></g><path d="M2089.50,123.30 h5.4 l-2.70,3.8 Z" fill="#363542"/><path d="M2144.2000000000003,74 H2136.3 V58.2 H2151.7000000000003 V66.1" fill="none" stroke="#363542" stroke-width="2" /><line x1="2145.90" y1="68.20" x2="2151.30" y2="73.40" stroke="#363542" stroke-width="3" /><polygon points="2154.70,69.60 2154.70,76.80 2147.50,76.80" fill="#363542" /><path d="M2149.9,79.3 V87.2 H2165.3 V71.8 H2157.3" fill="none" stroke="#363542" stroke-width="2" /><rect x="2268.90" y="70.80" width="17.80" height="17.80" fill="#363542" /><path d="M2265,67 L2271.2,73 M2275.7,68.4 V77.9 H2266.2" fill="none" stroke="#f3f2f7" stroke-width="4.6" stroke-linejoin="miter"/><path d="M2264.2000000000003,74 H2256.3 V58.2 H2271.7000000000003 V66.1" fill="none" stroke="#363542" stroke-width="2" /><line x1="2265.90" y1="68.20" x2="2271.30" y2="73.40" stroke="#363542" stroke-width="3" /><polygon points="2274.70,69.60 2274.70,76.80 2267.50,76.80" fill="#363542" /><path d="M2150.8,108.4 V104.6 H2137.7 V119.5 H2150.8 V115.8" fill="none" stroke="#363542" stroke-width="2.1" /><path d="M2154.1,108.4 V104.6 H2166.7 V119.5 H2154.1 V115.8" fill="none" stroke="#363542" stroke-width="2.1" /><rect x="2147.50" y="110.60" width="8.50" height="3.00" fill="#363542" /><polygon points="2155.40,107.30 2161.40,112.10 2155.40,116.90" fill="#363542" /><path d="M2242.00,111.50 h5.4 l-2.70,3.4 Z" fill="#363542"/><path d="M2271.3,108.4 V104.6 H2257.7 V119.5 H2271.3 V115.8" fill="none" stroke="#363542" stroke-width="2.1" /><rect x="2273.60" y="103.60" width="14.10" height="16.90" fill="#363542" /><path d="M2266,112.1 H2276 M2275.6,107.3 L2281.6,112.1 L2275.6,116.9 Z" fill="#f3f2f7" stroke="#f3f2f7" stroke-width="1.8" /><rect x="2266.60" y="109.70" width="9.60" height="4.80" fill="#f3f2f7" /><rect x="2267.60" y="110.60" width="8.50" height="3.00" fill="#363542" /><polygon points="2275.60,107.30 2281.60,112.10 2275.60,116.90" fill="#363542" /><path d="M2362.00,111.50 h5.4 l-2.70,3.4 Z" fill="#363542"/><line x1="2392.30" y1="67.90" x2="2392.30" y2="90.50" stroke="#363542" stroke-width="2.3" /><circle cx="2392.30" cy="94.80" r="1.15" fill="#363542" /><line x1="2400.60" y1="67.90" x2="2400.60" y2="90.50" stroke="#363542" stroke-width="2.3" /><circle cx="2400.60" cy="94.80" r="1.15" fill="#363542" /><line x1="2408.70" y1="67.90" x2="2408.70" y2="90.50" stroke="#363542" stroke-width="2.3" /><circle cx="2408.70" cy="94.80" r="1.15" fill="#363542" /><line x1="2389.20" y1="71.00" x2="2413.30" y2="71.00" stroke="#363542" stroke-width="2.3" /><circle cx="2416.70" cy="71.00" r="1.15" fill="#363542" /><line x1="2389.20" y1="78.90" x2="2413.30" y2="78.90" stroke="#363542" stroke-width="2.3" /><circle cx="2416.70" cy="78.90" r="1.15" fill="#363542" /><line x1="2389.20" y1="86.80" x2="2413.30" y2="86.80" stroke="#363542" stroke-width="2.3" /><circle cx="2416.70" cy="86.80" r="1.15" fill="#363542" /><path d="M2399.80,123.50 h5.4 l-2.70,3.6 Z" fill="#363542"/><rect x="2504.30" y="74.60" width="28.80" height="22.60" fill="none" stroke="#363542" stroke-width="2.1" /><rect x="2504.30" y="74.60" width="28.80" height="4.20" fill="#363542" /><circle cx="2506.50" cy="76.60" r="0.70" fill="#f3f2f7" /><circle cx="2510.60" cy="76.60" r="0.70" fill="#f3f2f7" /><circle cx="2514.70" cy="76.60" r="0.70" fill="#f3f2f7" /><path d="M2515.70,126.90 h5.4 l-2.70,3.6 Z" fill="#363542"/><line x1="2488.40" y1="60.40" x2="2496.10" y2="60.40" stroke="#6d6c78" stroke-width="1" /><rect x="2515.30" y="59.90" width="5.60" height="4.80" fill="none" stroke="#6d6c78" stroke-width="0.9" /><path d="M2517,59.9 V58.4 H2522.8 V63.4 H2520.9" fill="none" stroke="#6d6c78" stroke-width="0.9" /><path d="M2542.3,57.7 L2549.5,64.5 M2549.5,57.7 L2542.3,64.5" fill="none" stroke="#6d6c78" stroke-width="1.1" /><circle cx="2332.30" cy="15.30" r="7.30" fill="#363542" /><text x="2332.3" y="20" text-anchor="middle" font-family="Liberation Sans" font-weight="bold" font-size="12.5" fill="#e4e3ea">?</text><circle cx="2367" cy="16.25" r="7.1" fill="none" stroke="#363542" stroke-width="1.4"/><line x1="2363.30" y1="6.20" x2="2370.80" y2="6.20" stroke="#363542" stroke-width="1.4" /><line x1="2367.00" y1="6.20" x2="2367.00" y2="9.00" stroke="#363542" stroke-width="2" /><line x1="2372.00" y1="10.20" x2="2374.40" y2="7.90" stroke="#363542" stroke-width="1.1" /><polygon points="2373.20,7.20 2375.10,8.80 2374.20,9.80 2372.30,8.20" fill="#363542" /><path d="M2367,16.4 V10.9 A5.5,5.5 0 0 1 2371.3,19.8 Z" fill="#363542" stroke="none" stroke-width="0" /><line x1="2363.00" y1="12.50" x2="2364.60" y2="12.50" stroke="#363542" stroke-width="0.8" /><line x1="2362.00" y1="16.20" x2="2364.00" y2="16.20" stroke="#363542" stroke-width="1" /><line x1="2363.60" y1="19.60" x2="2364.60" y2="19.60" stroke="#363542" stroke-width="0.8" /><line x1="2366.60" y1="19.40" x2="2366.60" y2="21.40" stroke="#363542" stroke-width="0.9" /><line x1="2483.10" y1="15.40" x2="2493.70" y2="15.40" stroke="#4a4956" stroke-width="1.1" /><rect x="2511.30" y="12.90" width="7.60" height="7.30" fill="none" stroke="#4a4956" stroke-width="1" /><path d="M2513.6,12.9 V10.6 H2521.4 V17.9 H2518.9" fill="none" stroke="#4a4956" stroke-width="1" /><path d="M2540.8,10.4 L2550.9,20.4 M2550.9,10.4 L2540.8,20.4" fill="none" stroke="#4a4956" stroke-width="1.3" /><circle cx="2541.6" cy="40.2" r="3" fill="none" stroke="#363542" stroke-width="1.5"/><line x1="2543.80" y1="42.40" x2="2547.20" y2="45.80" stroke="#363542" stroke-width="1.8" /><path d="M587.10,42.4 Q593.3,35.00 599.50,42.4 Q593.3,49.80 587.10,42.4 Z" fill="#1f6fb0" stroke="none" stroke-width="0" /><circle cx="593.30" cy="42.40" r="2.44" fill="#f3f2f7" /><circle cx="593.30" cy="42.40" r="1.26" fill="#1f6fb0" /><path d="M486.4,56.5 V40.6 Q486.4,38.6 488.5,38.6 Q490.6,38.6 490.6,40.6 V46.6 Q490.8,45.2 492.6,45.2 Q494.5,45.2 494.5,47.2 Q494.8,46.3 496.4,46.3 Q498.3,46.4 498.3,48.4 Q498.7,47.6 500.2,47.7 Q502,47.9 502,50 V59 Q502,63 499.4,66.6 H488.4 Q486.4,62.6 481,57.8 Q479.6,56 481.4,55 Q483.4,54.2 486.4,56.5 Z" fill="#ffffff" stroke="#111118" stroke-width="1.2" stroke-linejoin="round"/><path d="M490.6,46.6 V52.4 M494.5,47.4 V52.4 M498.3,48.6 V52.6" fill="none" stroke="#111118" stroke-width="1.1" /><polygon points="2133.69,139.93 2134.91,139.93 2135.64,141.70 2136.47,142.04 2138.23,141.31 2139.09,142.17 2138.36,143.93 2138.70,144.76 2140.47,145.49 2140.47,146.71 2138.70,147.44 2138.36,148.27 2139.09,150.03 2138.23,150.89 2136.47,150.16 2135.64,150.50 2134.91,152.27 2133.69,152.27 2132.96,150.50 2132.13,150.16 2130.37,150.89 2129.51,150.03 2130.24,148.27 2129.90,147.44 2128.13,146.71 2128.13,145.49 2129.90,144.76 2130.24,143.93 2129.51,142.17 2130.37,141.31 2132.13,142.04 2132.96,141.70" fill="#6e6d79" stroke-linejoin="round" stroke="#6e6d79" stroke-width="0.6"/><circle cx="2134.30" cy="146.10" r="2.90" fill="#f3f2f7" /><circle cx="2491.00" cy="146.10" r="5.90" fill="#7b7a86" /><text x="2491" y="149.9" text-anchor="middle" font-family="Liberation Sans" font-weight="bold" font-size="10" fill="#f3f2f7">?</text><path d="M2507.6,141.1 L2517.6,151.1 M2517.6,141.1 L2507.6,151.1" fill="none" stroke="#74737f" stroke-width="2.9" /><polygon points="2136.50,176.50 2148.40,170.80 2148.40,182.20" fill="#363542" /><circle cx="2467.2" cy="204.8" r="2.9" fill="none" stroke="#363542" stroke-width="1.4"/><line x1="2469.30" y1="206.90" x2="2472.40" y2="210.00" stroke="#363542" stroke-width="1.7" /><line x1="2499.00" y1="203.20" x2="2507.80" y2="203.20" stroke="#4a4956" stroke-width="1.4" /><line x1="2499.00" y1="206.90" x2="2507.80" y2="206.90" stroke="#4a4956" stroke-width="1.4" /><line x1="2499.00" y1="210.60" x2="2507.80" y2="210.60" stroke="#4a4956" stroke-width="1.4" /><path d="M2539,146.5 L2545.1,150.5 L2539,154.7" fill="none" stroke="#363542" stroke-width="2.3" stroke-linejoin="miter"/><polygon points="2537.42,180.82 2538.38,180.82 2538.95,182.26 2539.60,182.53 2541.01,181.91 2541.69,182.59 2541.07,184.00 2541.34,184.65 2542.78,185.22 2542.78,186.18 2541.34,186.75 2541.07,187.40 2541.69,188.81 2541.01,189.49 2539.60,188.87 2538.95,189.14 2538.38,190.58 2537.42,190.58 2536.85,189.14 2536.20,188.87 2534.79,189.49 2534.11,188.81 2534.73,187.40 2534.46,186.75 2533.02,186.18 2533.02,185.22 2534.46,184.65 2534.73,184.00 2534.11,182.59 2534.79,181.91 2536.20,182.53 2536.85,182.26" fill="#363542" stroke-linejoin="round" stroke="#363542" stroke-width="0.6"/><circle cx="2537.90" cy="185.70" r="2.00" fill="#f3f2f7" /><text x="2542.6" y="184" font-family="Liberation Sans" font-weight="bold" font-size="10" fill="#363542">?</text><polygon points="2533.20,208.20 2540.80,205.40 2548.60,208.20 2540.80,211.00" fill="#363542" /><path d="M2536.9,210.4 V213.6 Q2540.8,216.6 2544.7,213.6 V210.4 L2540.8,211.9 Z" fill="#363542" stroke="none" stroke-width="0" /><line x1="2534.20" y1="209.20" x2="2534.20" y2="213.40" stroke="#363542" stroke-width="0.9" /><circle cx="2541" cy="240.5" r="7" fill="none" stroke="#363542" stroke-width="1.5"/><path d="M2536.4,236.4 Q2539,235.2 2540,237.4 Q2539.4,239.4 2537.6,239.6 Q2539.6,241.2 2539.4,243.6 Q2538.4,245 2537.4,243.4 Q2536,241 2535,240 Z" fill="#363542" stroke="none" stroke-width="0" /><path d="M2542.6,235.4 Q2545.6,236 2546.8,238.6 Q2545.6,240.2 2546.4,242.6 Q2545,244.4 2544.2,242 Q2543.4,240 2542,239 Q2541.8,237 2542.6,235.4 Z" fill="#363542" stroke="none" stroke-width="0" /><path d="M2536.4,274.4 Q2533,274.4 2533,271 Q2533,268.2 2535.8,267.8 Q2536.4,263.2 2540.8,263.2 Q2544.6,263.2 2545.6,266.8 Q2549,267.2 2549,270.8 Q2549,274.4 2545.6,274.4 Z" fill="#363542" stroke="none" stroke-width="0" /><polygon points="2540.21,289.74 2541.79,289.74 2542.80,291.87 2543.92,292.33 2546.14,291.54 2547.26,292.66 2546.47,294.88 2546.93,296.00 2549.06,297.01 2549.06,298.59 2546.93,299.60 2546.47,300.72 2547.26,302.94 2546.14,304.06 2543.92,303.27 2542.80,303.73 2541.79,305.86 2540.21,305.86 2539.20,303.73 2538.08,303.27 2535.86,304.06 2534.74,302.94 2535.53,300.72 2535.07,299.60 2532.94,298.59 2532.94,297.01 2535.07,296.00 2535.53,294.88 2534.74,292.66 2535.86,291.54 2538.08,292.33 2539.20,291.87" fill="#ffffff" stroke-linejoin="round" stroke="#ffffff" stroke-width="0.6"/><circle cx="2541.00" cy="297.80" r="3.30" fill="#005f9e" /><polygon points="2541.00,317.80 2548.50,322.00 2548.50,330.60 2541.00,334.90 2533.50,330.60 2533.50,322.00" fill="#363542" /><path d="M2541,334.5 V326.4 L2548.2,322.3 M2541,326.4 L2533.8,322.3" fill="none" stroke="#8b8a96" stroke-width="0.8" /><rect x="2533.30" y="347.80" width="6.60" height="6.50" fill="#363542" /><polygon points="2545.50,347.40 2549.10,354.30 2541.90,354.30" fill="#363542" /><circle cx="2536.50" cy="359.90" r="3.40" fill="#363542" /><rect x="2542.20" y="358.90" width="6.60" height="2.00" fill="#363542" /><rect x="2544.50" y="356.60" width="2.00" height="6.60" fill="#363542" /><circle cx="18.60" cy="1350.00" r="4.90" fill="#363542" /><path d="M15.6,1347.4 Q17.6,1346.4 18.4,1348 Q17.4,1349.4 16,1349.6 Z M19.8,1346.4 Q22,1347.4 22.2,1349.4 Q21,1350 20.4,1348.6 Z M16.4,1351 Q18.6,1351.4 18.4,1353.4 Q17,1353.6 16.4,1351 Z" fill="#ffffff" stroke="none" stroke-width="0" /><path d="M99.20,1348.50 h8.8 l-4.40,4.6 Z" fill="#2d2c38"/><line x1="122.50" y1="1350.60" x2="134.50" y2="1350.60" stroke="#cfced6" stroke-width="1.1" /><line x1="128.50" y1="1344.60" x2="128.50" y2="1356.60" stroke="#cfced6" stroke-width="1.1" /><rect x="146.60" y="1346.40" width="7.00" height="10.40" fill="#cfced6" /><rect x="145.80" y="1344.40" width="8.60" height="1.30" fill="#cfced6" /><rect x="148.60" y="1343.20" width="3.00" height="1.20" fill="#cfced6" /><circle cx="335.8" cy="1349.6" r="4.2" fill="none" stroke="#363542" stroke-width="1.8"/><line x1="338.90" y1="1352.70" x2="342.40" y2="1356.20" stroke="#363542" stroke-width="2.2" /><rect x="353.80" y="1345.20" width="10.40" height="10.80" fill="none" stroke="#363542" stroke-width="1" stroke-dasharray="1.3 1"/><circle cx="358.4" cy="1349.8" r="2.3" fill="none" stroke="#363542" stroke-width="1.2"/><line x1="360.00" y1="1351.60" x2="362.00" y2="1353.60" stroke="#363542" stroke-width="1.4" /><polygon points="386.30,1345.10 394.50,1352.50 390.70,1353.10 392.70,1356.90 390.90,1357.70 388.90,1354.10 386.30,1356.10" fill="#363542" /><polygon points="412.10,1345.70 416.30,1357.10 407.90,1357.10" fill="#4a9a3e" /><rect x="427.20" y="1345.10" width="12.20" height="12.60" fill="#3e8fc9" rx="0.8"/><line x1="448.90" y1="1345.90" x2="460.90" y2="1345.90" stroke="#363542" stroke-width="1.5" /><line x1="448.90" y1="1350.10" x2="460.90" y2="1350.10" stroke="#363542" stroke-width="1.5" /><line x1="448.90" y1="1354.70" x2="460.90" y2="1354.70" stroke="#363542" stroke-width="1.5" /><line x1="451.90" y1="1345.90" x2="451.90" y2="1356.90" stroke="#363542" stroke-width="1.1" /><line x1="457.90" y1="1345.90" x2="457.90" y2="1356.90" stroke="#363542" stroke-width="1.1" /><line x1="454.90" y1="1350.10" x2="454.90" y2="1354.70" stroke="#363542" stroke-width="1.1" /><line x1="450.40" y1="1356.70" x2="453.40" y2="1356.70" stroke="#363542" stroke-width="1.2" /><line x1="456.40" y1="1356.70" x2="459.40" y2="1356.70" stroke="#363542" stroke-width="1.2" /><circle cx="473.00" cy="1347.90" r="2.40" fill="#363542" /><circle cx="473.00" cy="1354.70" r="2.40" fill="#363542" /><circle cx="480.10" cy="1347.90" r="2.40" fill="#363542" /><circle cx="480.10" cy="1354.70" r="2.40" fill="#363542" /><line x1="492.30" y1="1356.70" x2="504.00" y2="1345.50" stroke="#363542" stroke-width="1.5" /><polygon points="519.70,1345.40 524.80,1348.20 524.80,1354.40 519.70,1357.20 514.60,1354.40 514.60,1348.20" fill="#ffffff" stroke="#363542" stroke-width="1.4" stroke-linejoin="round"/><polygon points="519.70,1351.10 524.80,1348.20 524.80,1354.40 519.70,1357.20" fill="#363542" /><path d="M519.7,1351.1 L514.6,1348.2" fill="none" stroke="#363542" stroke-width="1.2" /><line x1="537.20" y1="1346.30" x2="537.20" y2="1355.90" stroke="#363542" stroke-width="1.15" /><circle cx="537.20" cy="1357.60" r="0.60" fill="#363542" /><line x1="540.70" y1="1346.30" x2="540.70" y2="1355.90" stroke="#363542" stroke-width="1.15" /><circle cx="540.70" cy="1357.60" r="0.60" fill="#363542" /><line x1="544.20" y1="1346.30" x2="544.20" y2="1355.90" stroke="#363542" stroke-width="1.15" /><circle cx="544.20" cy="1357.60" r="0.60" fill="#363542" /><line x1="535.30" y1="1347.90" x2="545.90" y2="1347.90" stroke="#363542" stroke-width="1.15" /><circle cx="547.30" cy="1347.90" r="0.60" fill="#363542" /><line x1="535.30" y1="1351.10" x2="545.90" y2="1351.10" stroke="#363542" stroke-width="1.15" /><circle cx="547.30" cy="1351.10" r="0.60" fill="#363542" /><line x1="535.30" y1="1354.30" x2="545.90" y2="1354.30" stroke="#363542" stroke-width="1.15" /><circle cx="547.30" cy="1354.30" r="0.60" fill="#363542" /><line x1="558.80" y1="1346.30" x2="558.80" y2="1355.90" stroke="#363542" stroke-width="1.15" /><circle cx="558.80" cy="1357.60" r="0.60" fill="#363542" /><line x1="562.30" y1="1346.30" x2="562.30" y2="1355.90" stroke="#363542" stroke-width="1.15" /><circle cx="562.30" cy="1357.60" r="0.60" fill="#363542" /><line x1="565.80" y1="1346.30" x2="565.80" y2="1355.90" stroke="#f5841f" stroke-width="1.15" /><circle cx="565.80" cy="1357.60" r="0.60" fill="#363542" /><line x1="556.90" y1="1347.90" x2="567.50" y2="1347.90" stroke="#363542" stroke-width="1.15" /><circle cx="568.90" cy="1347.90" r="0.60" fill="#363542" /><line x1="556.90" y1="1351.10" x2="567.50" y2="1351.10" stroke="#363542" stroke-width="1.15" /><circle cx="568.90" cy="1351.10" r="0.60" fill="#363542" /><line x1="556.90" y1="1354.30" x2="567.50" y2="1354.30" stroke="#363542" stroke-width="1.15" /><circle cx="568.90" cy="1354.30" r="0.60" fill="#363542" /><line x1="565.80" y1="1345.30" x2="565.80" y2="1357.10" stroke="#f5841f" stroke-width="1.5" /><polygon points="585.90,1345.50 590.50,1352.10 587.90,1350.70 584.10,1352.90 582.70,1351.10 586.10,1348.70" fill="#363542" /><line x1="583.50" y1="1352.30" x2="579.10" y2="1356.70" stroke="#363542" stroke-width="1.3" stroke-dasharray="1.2 1.2"/><circle cx="579.50" cy="1350.80" r="0.55" fill="#363542" /><circle cx="581.70" cy="1356.10" r="0.55" fill="#363542" /><circle cx="585.10" cy="1354.70" r="0.55" fill="#363542" /><circle cx="578.90" cy="1353.70" r="0.55" fill="#363542" /><line x1="602.70" y1="1345.70" x2="609.10" y2="1354.30" stroke="#363542" stroke-width="1.6" /><line x1="609.70" y1="1345.70" x2="603.30" y2="1354.30" stroke="#363542" stroke-width="1.6" /><circle cx="602.3000000000001" cy="1355.5" r="1.9" fill="none" stroke="#363542" stroke-width="1.3"/><circle cx="610.1" cy="1355.5" r="1.9" fill="none" stroke="#363542" stroke-width="1.3"/><rect x="621.80" y="1346.70" width="11.80" height="9.00" fill="none" stroke="#363542" stroke-width="1.5" /><rect x="621.80" y="1346.70" width="11.80" height="2.20" fill="#363542" /><rect x="644.30" y="1345.30" width="2.00" height="11.60" fill="#363542" /><rect x="644.30" y="1346.70" width="9.60" height="2.60" fill="#363542" /><rect x="644.30" y="1353.70" width="9.60" height="2.60" fill="#363542" /><rect x="665.10" y="1345.90" width="2.60" height="10.00" fill="#363542" /><rect x="667.70" y="1349.70" width="9.40" height="2.80" fill="#363542" /><line x1="671.30" y1="1349.50" x2="671.30" y2="1352.70" stroke="#f3f2f7" stroke-width="0.5" /><line x1="673.10" y1="1349.50" x2="673.10" y2="1352.70" stroke="#f3f2f7" stroke-width="0.5" /><line x1="674.90" y1="1349.50" x2="674.90" y2="1352.70" stroke="#f3f2f7" stroke-width="0.5" /><path d="M691.5,1346.3 v2.6 h6 v-2.6" fill="none" stroke="#6d6c78" stroke-width="1.1" /><path d="M689.1,1350.8999999999999 v2.6 h6.4 v-2.6" fill="none" stroke="#6d6c78" stroke-width="1.1" /><path d="M686.9,1355.3 v2.6 h4 v-2.6" fill="none" stroke="#6d6c78" stroke-width="1.1" /><path d="M713.1,1346.3 v2.6 h6 v-2.6" fill="none" stroke="#f5841f" stroke-width="1.1" /><path d="M710.7,1350.8999999999999 v2.6 h6.4 v-2.6" fill="none" stroke="#f5841f" stroke-width="1.1" /><path d="M708.5,1355.3 v2.6 h4 v-2.6" fill="none" stroke="#55546a" stroke-width="1.1" /><path d="M734.6999999999999,1346.3 v2.6 h6 v-2.6" fill="none" stroke="#6d6c78" stroke-width="1.1" /><path d="M732.3,1350.8999999999999 v2.6 h6.4 v-2.6" fill="none" stroke="#f5841f" stroke-width="1.1" /><path d="M730.0999999999999,1355.3 v2.6 h4 v-2.6" fill="none" stroke="#55546a" stroke-width="1.1" /><rect x="751.50" y="1345.50" width="11.60" height="11.40" fill="#363542" /><path d="M757.9000000000001,1356.8999999999999 V1350.8999999999999 H763.1 M755.7,1356.8999999999999 V1348.8999999999999 H760.9000000000001 V1345.5 M758.7,1345.5 V1347.1" fill="none" stroke="#cfced6" stroke-width="0.8" /><path d="M774.6999999999999,1355.3 V1346.5 H783.1 V1355.3" fill="none" stroke="#363542" stroke-width="1.5" /><polygon points="772.90,1353.90 776.50,1353.90 774.70,1356.90" fill="#363542" /><polygon points="781.30,1353.90 784.90,1353.90 783.10,1356.90" fill="#363542" /><path d="M794.9,1349.8999999999999 L800.5,1346.8999999999999 L806.1,1349.8999999999999 L800.5,1352.8999999999999 Z" fill="none" stroke="#363542" stroke-width="1.2" stroke-linejoin="round"/><path d="M794.9,1352.8999999999999 L800.5,1355.8999999999999 L806.1,1352.8999999999999" fill="none" stroke="#363542" stroke-width="1.2" stroke-linejoin="round"/><path d="M827.1,1346.3 L817.7,1353.1 L822.9,1356.8999999999999" fill="none" stroke="#363542" stroke-width="1.5" stroke-linejoin="round"/><path d="M823.7,1345.8999999999999 H827.5 V1349.5" fill="none" stroke="#363542" stroke-width="1.3" /><polygon points="816.10,1353.10 818.70,1350.70 819.10,1354.70" fill="#363542" /><rect x="841.10" y="1345.50" width="11.60" height="11.60" fill="#4a9a3e" /><polygon points="845.40,1347.00 848.20,1356.00 842.80,1356.00" fill="#ffffff" /><polygon points="848.20,1347.00 851.40,1347.00 849.80,1350.40" fill="#ffffff" /><polygon points="866.90,1346.00 870.80,1357.10 862.60,1357.10" fill="#4a9a3e" /><circle cx="872.20" cy="1347.40" r="1.60" fill="#363542" /><rect x="884.30" y="1345.50" width="11.80" height="11.60" fill="#3e8fc9" /><rect x="905.60" y="1345.50" width="11.80" height="11.60" fill="#3e8fc9" /><circle cx="886.50" cy="1347.70" r="1.50" fill="#dcebf6" /><circle cx="893.70" cy="1347.70" r="1.50" fill="#dcebf6" /><circle cx="886.50" cy="1354.90" r="1.50" fill="#dcebf6" /><circle cx="893.70" cy="1354.90" r="1.50" fill="#dcebf6" /><circle cx="890.10" cy="1351.30" r="1.50" fill="#dcebf6" /><rect x="909.60" y="1345.30" width="3.80" height="12.00" fill="#f3f2f7" /><rect x="905.40" y="1349.40" width="12.20" height="3.80" fill="#f3f2f7" /><rect x="906.50" y="1346.40" width="2.20" height="2.20" fill="#dcebf6" /><rect x="914.30" y="1346.40" width="2.20" height="2.20" fill="#dcebf6" /><rect x="906.50" y="1354.00" width="2.20" height="2.20" fill="#dcebf6" /><rect x="914.30" y="1354.00" width="2.20" height="2.20" fill="#dcebf6" /><circle cx="911.5" cy="1351.3" r="2.4" fill="none" stroke="#3e8fc9" stroke-width="1.8"/><circle cx="931" cy="1350.2" r="3.6" fill="none" stroke="#363542" stroke-width="1.3"/><path d="M931,1348.4 V1350.4 H932.6" fill="none" stroke="#363542" stroke-width="0.8" /><path d="M931.2,1353.8 Q931.4,1355.6 933,1355.6" fill="none" stroke="#363542" stroke-width="1.2" /><rect x="932.60" y="1354.60" width="6.80" height="2.00" fill="#363542" /><path d="M1003.80,1348.60 h8.4 l-4.20,4.4 Z" fill="#2d2c38"/><defs><pattern id="hx" width="3.2" height="3.2" patternUnits="userSpaceOnUse"><rect width="1.6" height="1.6" fill="#363542"/><rect x="1.6" y="1.6" width="1.6" height="1.6" fill="#363542"/></pattern></defs><circle cx="1038" cy="1350.8" r="5.8" fill="url(#hx)"/><path d="M1078.50,1351.3 Q1084.4,1344.30 1090.30,1351.3 Q1084.4,1358.30 1078.50,1351.3 Z" fill="#363542" stroke="none" stroke-width="0" /><circle cx="1084.40" cy="1351.30" r="2.31" fill="#f3f2f7" /><circle cx="1084.40" cy="1351.30" r="1.19" fill="#363542" /><rect x="1109.10" y="1345.80" width="11.40" height="11.00" fill="none" stroke="#363542" stroke-width="1.5" /><path d="M1109.1000000000001,1345.8 L1120.5,1356.8 M1120.5,1345.8 L1109.1000000000001,1356.8" fill="none" stroke="#363542" stroke-width="1.4" /><rect x="1130.70" y="1345.80" width="11.20" height="11.00" fill="none" stroke="#363542" stroke-width="1.5" /><circle cx="1158.7" cy="1351.3" r="5.4" fill="none" stroke="#363542" stroke-width="1.4"/><path d="M1179.5,1346.3999999999999 L1184.7,1356.2 H1174.3 Z" fill="none" stroke="#363542" stroke-width="1.4" stroke-linejoin="miter"/><path d="M1195.5000000000002,1345.8 L1206.9,1356.8 M1206.9,1345.8 L1195.5000000000002,1356.8" fill="none" stroke="#363542" stroke-width="1.5" /><path d="M1216.9,1356.6 H1228.7 V1345.3 M1228.7,1351.3 H1223.0 V1356.6" fill="none" stroke="#363542" stroke-width="1.5" /><line x1="1237.50" y1="1351.70" x2="1242.50" y2="1351.70" stroke="#363542" stroke-width="1" stroke-dasharray="1 0.9"/><path d="M1242.7000000000003,1346.1 H1249.5000000000002 L1242.7000000000003,1356.5 H1249.5000000000002 Z" fill="none" stroke="#363542" stroke-width="1.2" stroke-linejoin="round"/><path d="M1260.7,1350.7 L1264.5,1353.5 L1268.9,1348.1 L1272.1000000000001,1352.3" fill="none" stroke="#363542" stroke-width="1.4" stroke-linejoin="round"/><path d="M1286.7,1345.8 H1294.3 L1286.7,1356.8 H1294.3 Z" fill="none" stroke="#363542" stroke-width="1.4" stroke-linejoin="round"/><path d="M1307.2,1356.5 L1317.2,1346.5 M1306.4,1346.1 H1317.8000000000002 V1356.8999999999999" fill="none" stroke="#363542" stroke-width="1.5" /><rect x="1331.20" y="1345.80" width="11.40" height="11.00" fill="#55546a" /><rect x="1335.00" y="1349.00" width="3.80" height="4.60" fill="#f5841f" /><rect x="1354.70" y="1347.00" width="8.20" height="8.70" fill="#55546a" /><circle cx="1354.70" cy="1347.00" r="1.40" fill="#f5841f" /><circle cx="1354.70" cy="1355.70" r="1.40" fill="#f5841f" /><circle cx="1362.90" cy="1347.00" r="1.40" fill="#f5841f" /><circle cx="1362.90" cy="1355.70" r="1.40" fill="#f5841f" /><path d="M1409.00,1348.60 h8.4 l-4.20,4.4 Z" fill="#2d2c38"/><path d="M1500.20,1348.60 h8.4 l-4.20,4.4 Z" fill="#2d2c38"/><path d="M1609.00,1348.60 h8.4 l-4.20,4.4 Z" fill="#2d2c38"/><path d="M1638.30,1351.3 Q1644.2,1344.30 1650.10,1351.3 Q1644.2,1358.30 1638.30,1351.3 Z" fill="#363542" stroke="none" stroke-width="0" /><circle cx="1644.20" cy="1351.30" r="2.31" fill="#f3f2f7" /><circle cx="1644.20" cy="1351.30" r="1.19" fill="#363542" /></svg>
</body></html>
